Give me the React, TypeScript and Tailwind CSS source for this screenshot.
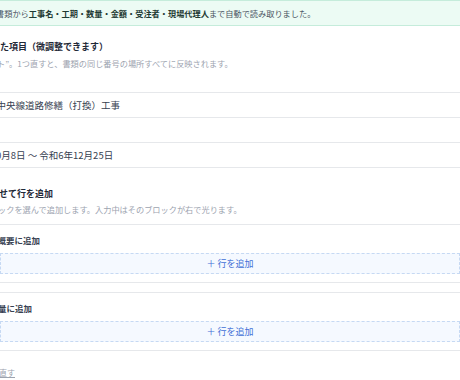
import React from 'react';

const FONT = { fontFamily: '"Noto Sans CJK JP", "Noto Sans", sans-serif' };

const AddBlock: React.FC<{ label: string; cut: string }> = ({ label, cut }) => (
  <div className="border-y border-[#e6e8eb] px-[30px] pt-[9px] pb-[8px]">
    <p className={`${cut} text-[8.5px] leading-[12px] font-semibold text-[#374151] whitespace-nowrap`}>{label}</p>
    <button className="mt-[7px] w-full h-[21px] border border-dashed border-[#c6d9f3] bg-[#f5f9ff] flex items-center justify-center text-[9px] text-[#3f6fd6]">
      ＋ 行を追加
    </button>
  </div>
);

export default function App() {
  return (
    <div className="w-[460px] h-[380px] overflow-hidden bg-white" style={FONT}>
      <div className="-mx-[30px]">
        <div className="h-[26px] border-y border-[#c5ecdb] bg-[#ecfbf4] flex items-center px-[30px]">
          <p className="-ml-[4px] text-[8.2px] leading-[12px] text-[#4b5563] whitespace-nowrap">
            書類から<b className="font-bold text-[#1f3a33]">工事名・工期・数量・金額・受注者・現場代理人</b>まで自動で読み取りました。
          </p>
        </div>

        <div className="px-[30px] pt-[14px]">
          <h2 className="text-[9px] leading-[13px] font-bold text-[#1f2937] whitespace-nowrap">た項目（微調整できます）</h2>
          <p className="-ml-[3px] mt-[4.5px] text-[8.2px] leading-[11px] text-[#9ca3af] whitespace-nowrap">
            ト”。1つ直すと、書類の同じ番号の場所すべてに反映されます。
          </p>
        </div>

        <div className="mt-[23.5px] border-t border-[#e6e8eb]">
          <div className="h-[25px] border-b border-[#e6e8eb] px-[30px] flex items-center">
            <span className="-ml-[3.5px] text-[9.5px] text-[#374151] whitespace-nowrap">中央線道路修繕（打換）工事</span>
          </div>
          <div className="h-[25px] border-b border-[#e6e8eb] px-[30px]" />
          <div className="h-[25px] border-b border-[#e6e8eb] px-[30px] flex items-center">
            <span className="-ml-[4px] text-[9.5px] text-[#374151] whitespace-nowrap">0月8日 〜 令和6年12月25日</span>
          </div>
        </div>

        <div className="px-[30px] pt-[18.5px] pb-[9.5px]">
          <h2 className="-ml-[1px] text-[9px] leading-[13px] font-bold text-[#1f2937] whitespace-nowrap">せて行を追加</h2>
          <p className="-ml-[2px] mt-[4px] text-[8.2px] leading-[11px] text-[#9ca3af] whitespace-nowrap">
            ックを選んで追加します。入力中はそのブロックが右で光ります。
          </p>
        </div>

        <div className="flex flex-col gap-[9px]">
          <AddBlock label="概要に追加" cut="-ml-[2.5px]" />
          <AddBlock label="量に追加" cut="-ml-[2px]" />
        </div>

        <div className="px-[30px] pt-[16px]">
          <a className="block -ml-[1px] text-[8px] leading-[12px] text-[#9ca3af] underline whitespace-nowrap">直す</a>
        </div>
      </div>
    </div>
  );
}
